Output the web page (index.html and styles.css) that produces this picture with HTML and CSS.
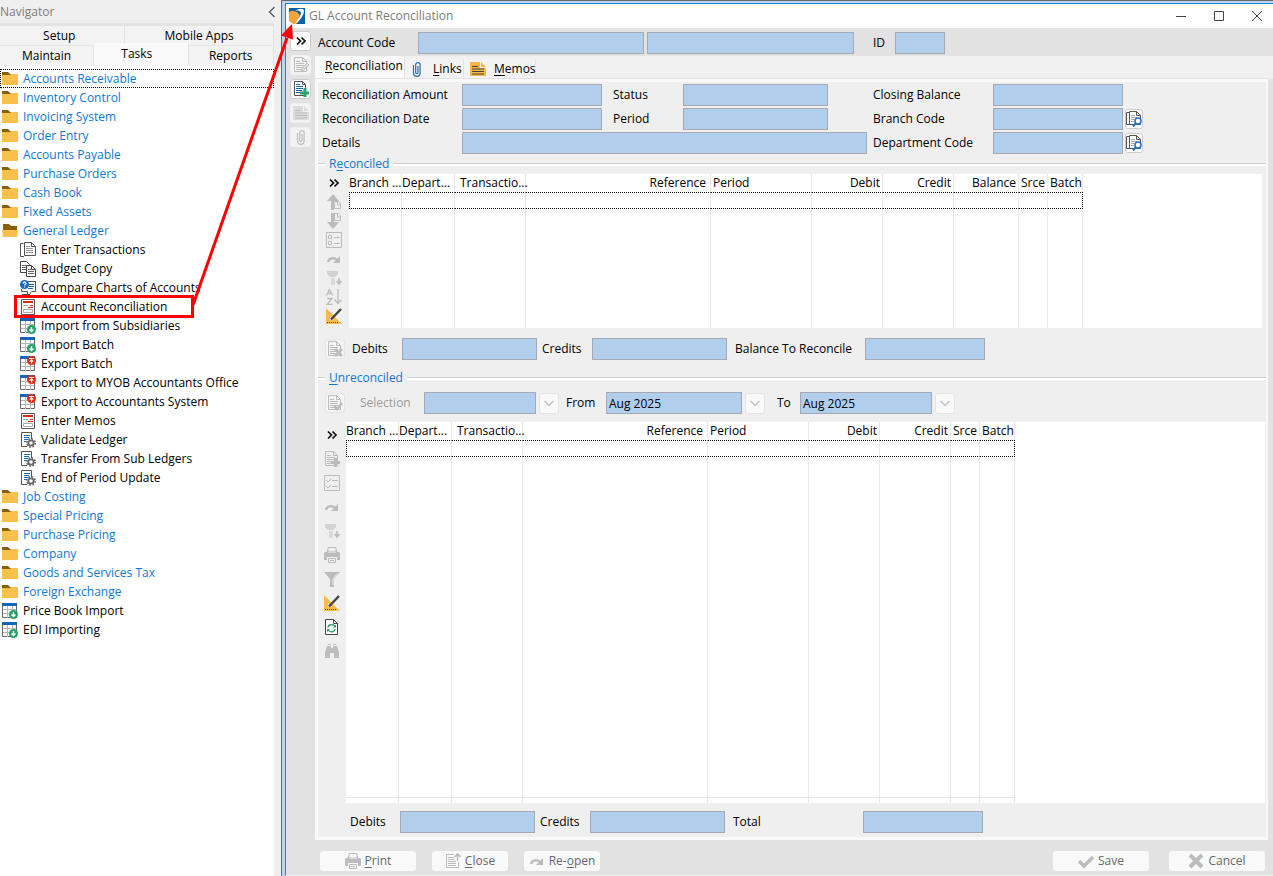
FILE: index.html
```html
<!DOCTYPE html>
<html lang="en">
<head>
<meta charset="utf-8">
<title>GL Account Reconciliation</title>
<link rel="stylesheet" href="styles.css">
</head>
<body>
<svg class="sprite" aria-hidden="true">
  <symbol id="folder" viewBox="0 0 16 16"><path d="M0 1h6l2 2h8v2H0z" fill="#8a5d0a"/><path d="M0 4h8l1-1h7v11H0z" fill="#fbc04c"/></symbol>
  <symbol id="folder-open" viewBox="0 0 16 16"><path d="M1 1h6l2 2h6v5H1z" fill="#8a5d0a"/><path d="M0 7h16l-1 7H1z" fill="#fbc04c"/></symbol>
  <symbol id="docs" viewBox="0 0 16 16"><path d="M3.500 1.500H.5v13H4M4.500.5h7l4 4v9h-11zM11.500.5v4h4" fill="#fff" stroke="#555"/><path d="M6 4.500h4M6 6.500h7M6 8.500h7M6 10.500h7" stroke="#999"/></symbol>
  <symbol id="copy" viewBox="0 0 16 16"><path d="M.5.5h6l3 3v8h-9z" fill="#fff" stroke="#444"/><path d="M2 4.500h5M2 6.500h5M2 8.500h4" stroke="#666"/><path d="M6.500 4.500h5l4 4v7h-9zM11.500 4.500v4h4" fill="#fff" stroke="#444"/><path d="M8 8.500h3M8 10.500h6M8 12.500h6" stroke="#666"/></symbol>
  <symbol id="compare" viewBox="0 0 16 16"><path d="M6 1.500h9.500v10h-4l-2 3H7.500v-3H1.500V9" fill="#fff" stroke="#555"/><path d="M9 4.500h5M9 6.500h5M8 8.500h5" stroke="#1c68b8"/><circle cx="4.500" cy="4.500" r="4.500" fill="#1564b5"/><path d="M3 3.500c0-2 3-2 3 0 0 1-1.500 1-1.500 2M4.500 6.500v1" fill="none" stroke="#fff" stroke-width="1.300"/><path d="M2 14.500h8" stroke="#555"/></symbol>
  <symbol id="form" viewBox="0 0 16 16"><path d="M1.500.5h13v15h-13z" fill="#fff" stroke="#555"/><path d="M3 3h10" stroke="#dc2a0c" stroke-width="2"/><path d="M10 6.500h3M8 8.500h5" stroke="#dc2a0c"/><path d="M3 6.500h5M3.500 10.500h9v3h-9z" fill="none" stroke="#aaa"/></symbol>
  <symbol id="grid" viewBox="0 0 16 16"><path d="M.5 1.500h14v13H.5z" fill="#fff" stroke="#666"/><path d="M5.500 3v12M10.500 3v12M1 6.500h13M1 10.500h13" stroke="#b6b6b6"/><path d="M0 0h15v3H0z" fill="#1564b5"/></symbol>
  <symbol id="import" viewBox="0 0 16 16"><use href="#grid"/><circle cx="11.500" cy="11.500" r="4.500" fill="#23a267"/><path d="M11.500 9v4M9.500 11.500l2 2 2-2" fill="none" stroke="#fff" stroke-width="1.400"/></symbol>
  <symbol id="export" viewBox="0 0 16 16"><use href="#grid"/><circle cx="11.500" cy="4.500" r="4.500" fill="#de2d10"/><path d="M9 2.500h5M11.500 7.500V4M9.700 5.600l1.800-1.700 1.800 1.700" fill="none" stroke="#fff" stroke-width="1.200"/></symbol>
  <symbol id="ledger" viewBox="0 0 16 16"><path d="M7 14.500H1.500V.5h10V7" fill="#fff" stroke="#555"/><path d="M4 3.500h6M4 5.500h5M4 7.500h4M4 9.500h3" stroke="#1c68b8"/><circle cx="11" cy="11" r="2.700" fill="#fff" stroke="#666" stroke-width="1.800"/><circle cx="11" cy="11" r="4.200" fill="none" stroke="#666" stroke-width="1.600" stroke-dasharray="1.600 1.700"/></symbol>
  <symbol id="doc" viewBox="0 0 16 16"><path d="M1.500.5h8l4 4v10h-12zM9.500.5v4h4" fill="none" stroke="currentColor"/><path d="M3 4.500h4M3 6.500h8M3 8.500h8M3 10.500h8M3 12.500h6" stroke="currentColor"/></symbol>
  <symbol id="doc-edit" viewBox="0 0 16 16"><use href="#doc"/><path d="M8 15l1-3 5-6 2 2-6 6z" fill="#ddd" stroke="currentColor"/></symbol>
  <symbol id="doc-add" viewBox="0 0 16 16"><use href="#doc"/><path d="M7 10h3V7h3v3h3v3h-3v3h-3v-3H7z" fill="currentColor"/></symbol>
  <symbol id="doc-new" viewBox="0 0 16 16"><path d="M1.500.5h8l3 3v11h-11zM9.500.5v3h3" fill="#fff" stroke="#555"/><path d="M3 3.500h4M3 5.500h7M3 7.500h7M3 9.500h6M3 11.500h5" stroke="#1c68b8"/><path d="M7 10.500h3.500V7h3v3.500H16v3h-2.500V16h-3v-2.500H7z" fill="#2aa06c"/></symbol>
  <symbol id="doc-x" viewBox="0 0 16 16"><use href="#doc"/><path d="M8 8l7 7M15 8l-7 7" stroke="currentColor" stroke-width="2.500"/></symbol>
  <symbol id="doc-ok" viewBox="0 0 16 16"><use href="#doc"/><path d="M7 11l3 3 5-6" fill="none" stroke="currentColor" stroke-width="2.500"/></symbol>
  <symbol id="doc-up" viewBox="0 0 16 16"><path d="M9 1.500H1.500v13h12V9" fill="none" stroke="currentColor"/><path d="M3 4.500h6M3 6.500h6M3 8.500h8M3 10.500h8M3 12.500h8" stroke="currentColor"/><path d="M12.500 8V1M9.500 4l3-3 3 3" fill="none" stroke="currentColor" stroke-width="1.600"/></symbol>
  <symbol id="note" viewBox="0 0 16 16"><path d="M0 1h10v6h6v8H0z" fill="currentColor"/><path d="M11 1l5 5h-5z" fill="currentColor"/><path class="note-line" d="M2 5.500h6M2 8h12M2 10.500h12M2 13h12"/></symbol>
  <symbol id="clip" viewBox="0 0 16 16"><path d="M4.500 4v8a3.300 3.300 0 0 0 6.600 0V3a2.400 2.400 0 0 0-4.400 0V11.500a1.100 1.100 0 0 0 2.300 0V5" fill="none" stroke="currentColor" stroke-width="1.200"/></symbol>
  <symbol id="chev" viewBox="0 0 16 16"><path d="M4 4.500L7.500 8 4 11.500M8.500 4.500L12 8l-3.500 3.500" fill="none" stroke="#111" stroke-width="1.700"/></symbol>
  <symbol id="up" viewBox="0 0 16 16"><path d="M5 16V7H1l6-7 6 7H8v9z" fill="currentColor"/><path d="M8.500 7.500h4l2 2v5h-6zM11.500 8v3h3" fill="#eee" stroke="currentColor"/></symbol>
  <symbol id="down" viewBox="0 0 16 16"><path d="M5 0h3v9h5l-6 7-6-7h4z" fill="currentColor"/><path d="M8.500.5h4l2 2v5h-6zM11.500 1v3h3" fill="#eee" stroke="currentColor"/></symbol>
  <symbol id="props" viewBox="0 0 16 16"><path d="M.5.500h15v15H.5zM2.500 3.500h3v3h-3zM2.500 9.500h3v3h-3zM8 5.500h6M8 11.500h6" fill="none" stroke="currentColor"/></symbol>
  <symbol id="checks" viewBox="0 0 16 16"><path d="M.5.500h15v15H.5zM2 5l2 2 3-3M2 11l2 2 3-3M8 5.500h6M8 11.500h6" fill="none" stroke="currentColor"/></symbol>
  <symbol id="redo" viewBox="0 0 16 16"><path d="M2 11c1-4 6-5 9-2" fill="none" stroke="currentColor" stroke-width="2.500"/><path d="M14 5v7H7z" fill="currentColor"/></symbol>
  <symbol id="brush" viewBox="0 0 16 16"><path d="M1 1h11v3l-3 3H4L1 4z" fill="#d2d2d2"/><path d="M5 8h4v7H5z" fill="#dadada"/><path d="M13 8v5M10.500 11l2.500 3 2.500-3" fill="none" stroke="currentColor" stroke-width="1.600"/></symbol>
  <symbol id="sort" viewBox="0 0 16 16"><path d="M.5 6.500L3.500.5l3 6M1.500 4.500h4M1 9.500h5l-5 6h5.500M12 0v14M8.500 10.500L12 14.500l3.500-4" fill="none" stroke="currentColor" stroke-width="1.300"/></symbol>
  <symbol id="design" viewBox="0 0 16 16"><path d="M0 0l16 16H0zM4 8v4h4z" fill="#fdb94d" fill-rule="evenodd"/><path d="M5 11.500L15 1" stroke="#444" stroke-width="2.400"/><path d="M1 14.500h11" stroke="#444" stroke-dasharray="1 1"/></symbol>
  <symbol id="printer" viewBox="0 0 16 16"><path d="M4 .5h8V5H4z" fill="none" stroke="currentColor"/><path d="M3 3h1v3h8V3h1v2h2l1 1v7h-3v-3H3v3H0V6l1-1h2z" fill="currentColor"/><path d="M4.500 11.500h7v4h-7zM6 13.500h4" fill="none" stroke="currentColor"/></symbol>
  <symbol id="funnel" viewBox="0 0 16 16"><path d="M0 1h16l-6 7v8H6V8z" fill="currentColor"/><path d="M13.500 2.500L9 8v6" fill="none" stroke="#efefef"/></symbol>
  <symbol id="refresh" viewBox="0 0 16 16"><path d="M1.500.5h8l4 4v11h-12zM9.500.5v4h4" fill="#fff" stroke="#444"/><path d="M4 8.500c0-3 5-4 7-1M11 10c0 3-5 4-7 1" fill="none" stroke="#23a267" stroke-width="1.300"/><path d="M12 5.500v3H9zM3 13v-3h3z" fill="#23a267"/></symbol>
  <symbol id="binoc" viewBox="0 0 16 16"><path d="M3 3h4v2h2V3h4l2 6v6h-5v-5H6v5H1V9zM4 1h3v1H4zM9 1h3v1H9z" fill="currentColor"/></symbol>
  <symbol id="lookup" viewBox="0 0 16 16"><path d="M3 1.500H.5v12H4M3.500.5h7l4 4v9h-11zM10.500.5v4h4" fill="#fff" stroke="#555"/><path d="M5 4.500h4M5 6.500h6M5 8.500h3M5 10.500h3" stroke="#aaa"/><circle cx="12" cy="10" r="3" fill="#fff" stroke="#1f71c4" stroke-width="1.500"/><path d="M10 12l-3 3.500" stroke="#1f71c4" stroke-width="2"/></symbol>
  <symbol id="drop" viewBox="0 0 16 16"><path d="M3.500 6L8 10.500 12.500 6" fill="none" stroke="#c4c4c4" stroke-width="1.500"/></symbol>
  <symbol id="tick" viewBox="0 0 16 16"><path d="M1 8l5 5 9-9" fill="none" stroke="currentColor" stroke-width="3.500"/></symbol>
  <symbol id="cross" viewBox="0 0 16 16"><path d="M2 2l12 12M14 2L2 14" stroke="currentColor" stroke-width="4"/></symbol>
  <symbol id="app" viewBox="0 0 16 16"><path d="M0 0h16v16H0z" fill="#0d62a6"/><path d="M0 4c3-2 8-1 10 2 2 4 0 8-3 10H0z" fill="#f1a43a"/><path d="M6 3c4-3 9-3 9 0 0 4-4 10-9 13 3-5 6-9 6-11s-3-3-6-2z" fill="#f5f9fc"/><path d="M0 13l4 3H0z" fill="#fff"/></symbol>
</svg>

<div class="app">
  <aside class="nav">
    <header class="nav-head"><span>Navigator</span>
      <button class="plain" type="button" aria-label="Collapse navigator"><svg width="8" height="12" viewBox="0 0 8 12"><path d="M6.500 1L1.500 6l5 5" fill="none" stroke="#555" stroke-width="1.300"/></svg></button></header>
    <div class="nav-tabs top"><button type="button">Setup</button><button type="button">Mobile Apps</button></div>
    <div class="nav-tabs low"><button type="button">Maintain</button><button type="button" class="on">Tasks</button><button type="button">Reports</button></div>
    <ul class="tree">
      <li class="focus"><a href="#"><svg><use href="#folder"/></svg>Accounts Receivable</a></li>
      <li><a href="#"><svg><use href="#folder"/></svg>Inventory Control</a></li>
      <li><a href="#"><svg><use href="#folder"/></svg>Invoicing System</a></li>
      <li><a href="#"><svg><use href="#folder"/></svg>Order Entry</a></li>
      <li><a href="#"><svg><use href="#folder"/></svg>Accounts Payable</a></li>
      <li><a href="#"><svg><use href="#folder"/></svg>Purchase Orders</a></li>
      <li><a href="#"><svg><use href="#folder"/></svg>Cash Book</a></li>
      <li><a href="#"><svg><use href="#folder"/></svg>Fixed Assets</a></li>
      <li><a href="#"><svg><use href="#folder-open"/></svg>General Ledger</a>
        <ul>
          <li><a href="#"><svg><use href="#docs"/></svg>Enter Transactions</a></li>
          <li><a href="#"><svg><use href="#copy"/></svg>Budget Copy</a></li>
          <li><a href="#"><svg><use href="#compare"/></svg>Compare Charts of Accounts</a></li>
          <li><a href="#"><svg><use href="#form"/></svg>Account Reconciliation</a></li>
          <li><a href="#"><svg><use href="#import"/></svg>Import from Subsidiaries</a></li>
          <li><a href="#"><svg><use href="#import"/></svg>Import Batch</a></li>
          <li><a href="#"><svg><use href="#export"/></svg>Export Batch</a></li>
          <li><a href="#"><svg><use href="#export"/></svg>Export to MYOB Accountants Office</a></li>
          <li><a href="#"><svg><use href="#export"/></svg>Export to Accountants System</a></li>
          <li><a href="#"><svg><use href="#form"/></svg>Enter Memos</a></li>
          <li><a href="#"><svg><use href="#ledger"/></svg>Validate Ledger</a></li>
          <li><a href="#"><svg><use href="#ledger"/></svg>Transfer From Sub Ledgers</a></li>
          <li><a href="#"><svg><use href="#ledger"/></svg>End of Period Update</a></li>
        </ul>
      </li>
      <li><a href="#"><svg><use href="#folder"/></svg>Job Costing</a></li>
      <li><a href="#"><svg><use href="#folder"/></svg>Special Pricing</a></li>
      <li><a href="#"><svg><use href="#folder"/></svg>Purchase Pricing</a></li>
      <li><a href="#"><svg><use href="#folder"/></svg>Company</a></li>
      <li><a href="#"><svg><use href="#folder"/></svg>Goods and Services Tax</a></li>
      <li><a href="#"><svg><use href="#folder"/></svg>Foreign Exchange</a></li>
      <li class="leaf"><a href="#"><svg><use href="#import"/></svg>Price Book Import</a></li>
      <li class="leaf"><a href="#"><svg><use href="#import"/></svg>EDI Importing</a></li>
    </ul>
  </aside>

  <main class="window">
    <header class="title"><svg><use href="#app"/></svg><h1>GL Account Reconciliation</h1>
      <button class="plain" type="button" aria-label="Minimize"><svg width="12" height="12"><path d="M1 6.500h10" stroke="#444"/></svg></button>
      <button class="plain" type="button" aria-label="Maximize"><svg width="12" height="12"><path d="M1.500 1.500h9v9h-9z" fill="none" stroke="#444"/></svg></button>
      <button class="plain" type="button" aria-label="Close window"><svg width="12" height="12"><path d="M1 1l10 10M11 1L1 11" stroke="#444"/></svg></button>
    </header>
    <div class="work">
      <div class="side">
        <button class="tool" type="button" aria-label="Expand"><svg><use href="#chev"/></svg></button>
        <button class="tool" type="button" aria-label="Edit" disabled><svg><use href="#doc-edit"/></svg></button>
        <button class="tool" type="button" aria-label="New"><svg><use href="#doc-new"/></svg></button>
        <button class="tool memo" type="button" aria-label="Memo" disabled><svg><use href="#note"/></svg></button>
        <button class="tool" type="button" aria-label="Attachment" disabled><svg><use href="#clip"/></svg></button>
      </div>
      <div class="content">
        <div class="account">
          <label for="code">Account Code</label><input id="code"><input id="name" aria-label="Account name"><label for="id">ID</label><input id="id">
        </div>
        <div class="tabs">
          <button class="on" type="button"><span><u>R</u>econciliation</span></button>
          <button class="links" type="button"><svg><use href="#clip"/></svg><span><u>L</u>inks</span></button>
          <button class="memos" type="button"><svg><use href="#note"/></svg><span><u>M</u>emos</span></button>
        </div>
        <div class="panel">
          <div class="details">
            <label for="amount">Reconciliation Amount</label><input id="amount">
            <label class="c4" for="status">Status</label><input id="status">
            <label class="c8" for="closing">Closing Balance</label><input id="closing">
            <label class="c1" for="date">Reconciliation Date</label><input id="date">
            <label class="c4" for="period">Period</label><input id="period">
            <label class="c8" for="branch">Branch Code</label><input id="branch">
            <button class="look" type="button" aria-label="Find branch"><svg><use href="#lookup"/></svg></button>
            <label class="c1" for="details">Details</label><input class="wide" id="details">
            <label class="c8" for="dept">Department Code</label><input id="dept">
            <button class="look" type="button" aria-label="Find department"><svg><use href="#lookup"/></svg></button>
          </div>
          <h2><span>R<u>e</u>conciled</span></h2>
          <div class="listing first">
            <div class="rail">
              <button type="button" aria-label="Expand"><svg><use href="#chev"/></svg></button>
              <button type="button" aria-label="Move up" disabled><svg><use href="#up"/></svg></button>
              <button type="button" aria-label="Move down" disabled><svg><use href="#down"/></svg></button>
              <button type="button" aria-label="Properties" disabled><svg><use href="#props"/></svg></button>
              <button type="button" aria-label="Redo" disabled><svg><use href="#redo"/></svg></button>
              <button type="button" aria-label="Format" disabled><svg><use href="#brush"/></svg></button>
              <button type="button" aria-label="Sort" disabled><svg><use href="#sort"/></svg></button>
              <button type="button" aria-label="Design"><svg><use href="#design"/></svg></button>
            </div>
            <div class="sheet">
              <table>
                <colgroup><col class="w53"><col class="w53"><col class="w71"><col class="w185"><col class="w101"><col class="w71"><col class="w71"><col class="w65"><col class="w29"><col class="w35"></colgroup>
                <thead><tr><th>Branch ...</th><th class="tight">Depart...</th><th class="in">Transactio...</th><th class="r ref">Reference</th><th>Period</th><th class="r">Debit</th><th class="r">Credit</th><th class="r">Balance</th><th>Srce</th><th>Batch</th></tr></thead>
                <tbody><tr class="row"><td></td><td></td><td></td><td></td><td></td><td></td><td></td><td></td><td></td><td></td></tr>
                <tr class="rest"><td></td><td></td><td></td><td></td><td></td><td></td><td></td><td></td><td></td><td></td></tr></tbody>
              </table>
            </div>
          </div>
          <div class="sums">
            <button class="mini" type="button" aria-label="Clear" disabled><svg><use href="#doc-x"/></svg></button>
            <label for="d1">Debits</label><input id="d1">
            <label for="c1">Credits</label><input id="c1">
            <label for="b1">Balance To Reconcile</label><input id="b1">
          </div>
          <h2><span><u>U</u>nreconciled</span></h2>
          <div class="select">
            <button class="mini" type="button" aria-label="Select" disabled><svg><use href="#doc-ok"/></svg></button>
            <label class="dim" for="sel">Selection</label><input id="sel">
            <button class="drop" type="button" aria-label="Open selection" disabled><svg><use href="#drop"/></svg></button>
            <label for="from">From</label><input id="from" value="Aug 2025">
            <button class="drop" type="button" aria-label="Open from period" disabled><svg><use href="#drop"/></svg></button>
            <label for="to">To</label><input id="to" value="Aug 2025">
            <button class="drop" type="button" aria-label="Open to period" disabled><svg><use href="#drop"/></svg></button>
          </div>
          <div class="listing second">
            <div class="rail">
              <button type="button" aria-label="Expand"><svg><use href="#chev"/></svg></button>
              <button type="button" aria-label="Add" disabled><svg><use href="#doc-add"/></svg></button>
              <button type="button" aria-label="Check all" disabled><svg><use href="#checks"/></svg></button>
              <button type="button" aria-label="Redo" disabled><svg><use href="#redo"/></svg></button>
              <button type="button" aria-label="Format" disabled><svg><use href="#brush"/></svg></button>
              <button type="button" aria-label="Print list" disabled><svg><use href="#printer"/></svg></button>
              <button type="button" aria-label="Filter" disabled><svg><use href="#funnel"/></svg></button>
              <button type="button" aria-label="Design"><svg><use href="#design"/></svg></button>
              <button type="button" aria-label="Refresh"><svg><use href="#refresh"/></svg></button>
              <button type="button" aria-label="Find" disabled><svg><use href="#binoc"/></svg></button>
            </div>
            <div class="sheet">
              <table>
                <colgroup><col class="w53"><col class="w53"><col class="w71"><col class="w185"><col class="w101"><col class="w71"><col class="w71"><col class="w29"><col class="w35"></colgroup>
                <thead><tr><th>Branch ...</th><th class="tight">Depart...</th><th class="in">Transactio...</th><th class="r ref">Reference</th><th>Period</th><th class="r">Debit</th><th class="r">Credit</th><th>Srce</th><th>Batch</th></tr></thead>
                <tbody><tr class="row"><td></td><td></td><td></td><td></td><td></td><td></td><td></td><td></td><td></td></tr>
                <tr class="rest"><td></td><td></td><td></td><td></td><td></td><td></td><td></td><td></td><td></td></tr></tbody>
                <tfoot><tr><td></td><td></td><td></td><td></td><td></td><td></td><td></td><td></td><td></td></tr></tfoot>
              </table>
            </div>
          </div>
          <div class="sums last">
            <label for="d2">Debits</label><input id="d2">
            <label for="c2">Credits</label><input id="c2">
            <label for="t2">Total</label><input id="t2">
          </div>
        </div>
      </div>
    </div>
    <footer class="actions">
      <div class="group">
        <button class="big" type="button" disabled><svg><use href="#printer"/></svg><span><u>P</u>rint</span></button>
        <button type="button" disabled><svg><use href="#doc-up"/></svg><span><u>C</u>lose</span></button>
        <button type="button" disabled><svg><use href="#redo"/></svg><span>Re-<u>o</u>pen</span></button>
      </div>
      <div class="group end">
        <button class="big" type="button" disabled><svg><use href="#tick"/></svg><span>Save</span></button>
        <button class="big" type="button" disabled><svg><use href="#cross"/></svg><span>Cancel</span></button>
      </div>
    </footer>
  </main>
</div>
<svg class="callout" width="320" height="330" aria-hidden="true"><path d="M15.500 296.500h177v20h-177z" fill="none" stroke="#f00" stroke-width="3"/><path d="M193 305L287 38" stroke="#f00" stroke-width="3"/><path d="M292 24L281 35.500l12 4z" fill="#f00"/></svg>
</body>
</html>
```
FILE: styles.css
```css
* { box-sizing: border-box; }
body { margin: 0; background: #efefef; color: #000; font: 12px/18px "Open Sans", "Noto Sans", sans-serif; }
button, input { font: inherit; color: inherit; margin: 0; }
button { padding: 0; border: 0; background: none; display: flex; align-items: center; justify-content: center; }
svg { width: 16px; height: 16px; flex: none; display: block; }
.sprite { position: absolute; width: 0; height: 0; }
.plain svg { width: 12px; height: 12px; }
label { white-space: nowrap; }
u { text-underline-offset: 2px; }
input { height: 22px; width: 100%; min-width: 0; padding: 0 2px; border: 1px solid #a6a9b1; border-radius: 0; background: #b1ceec; }

.app { display: grid; grid-template-columns: 281px minmax(0, 1fr); height: 100vh; overflow: hidden; }

.nav { display: flex; flex-direction: column; background: #efefef; }
.nav-head { display: flex; justify-content: space-between; align-items: center; height: 23px; padding-right: 3px; color: #7c7c7c; }
.nav-tabs { display: flex; height: 20px; margin-right: 7px; background: #e3e3e3; }
.nav-tabs.top { height: 23px; padding-top: 3px; border-bottom: 1px solid #e6e6e6; }
.nav-tabs button { flex: 97; background: #f3f3f3; border-right: 1px solid #e3e3e3; }
.nav-tabs.top button:first-child { flex: 122; padding-right: 6px; }
.nav-tabs.top button:last-child { flex: 152; }
.nav-tabs button.on { flex: 89; margin-top: -3px; padding: 0 8px 2px 0; background: #f9f9f9; }
.nav-tabs.low button:last-child { flex: 88; }
.tree { flex: 1; margin: 0 7px 0 0; padding: 3px 0 0; list-style: none; background: #fff; }
.tree ul { margin: 0; padding: 0 0 0 18px; list-style: none; }
.tree a { display: flex; align-items: center; gap: 5px; height: 19px; padding-left: 2px; color: #0f78d4; text-decoration: none; white-space: nowrap; }
.tree ul a, .tree .leaf a { color: #000; }
.focus { outline: 1px dotted #000; outline-offset: -1px; }

.window { display: flex; flex-direction: column; min-width: 0; border-top: 1px solid #6b6b6b; border-left: 1px solid #6b6b6b; background: #b8d6ef; padding: 2px 0 0 3px; }
.title { display: flex; align-items: center; height: 25px; padding: 0 10px 0 3px; background: #fff; border-top: 1px solid #1c88cf; border-left: 1px solid #1c88cf; color: #7c7c7c; }
.title h1 { flex: 1; margin: 0 0 0 4px; font-size: 12px; font-weight: 400; }
.title button { width: 12px; margin-left: 26px; }
.work { flex: 1; display: flex; min-height: 0; border-left: 1px solid #1c88cf; background: #e2e2e2; }
.side { width: 29px; padding: 3px 4px; display: flex; flex-direction: column; gap: 4px; }
.tool { width: 21px; height: 20px; border: 1px solid #ccc; border-radius: 3px; background: #fcfcfc; }
.tool:disabled { border-color: #eee; background: #f3f3f3; }
button:disabled { color: #bcbcbc; }
.note-line { stroke: var(--line, #fff); }
.tool.memo { --line: #bcbcbc; color: #dcdcdc; }
.content { flex: 1; display: flex; flex-direction: column; min-width: 0; }
.account { display: grid; grid-template-columns: 97px 226px 207px 35px 50px; column-gap: 3px; align-items: center; height: 28px; padding: 3px 2px 1px 3px; }
.account label:nth-of-type(2) { padding-left: 16px; }
.tabs { display: flex; align-items: flex-end; height: 23px; background: #f0f0f0; }
.tabs button { justify-content: flex-start; height: 20px; background: #f3f3f3; border-right: 1px solid #e2e2e2; gap: 8px; }
.tabs .on { height: 23px; width: 90px; padding: 0 0 3px 10px; background: #fafafa; }
.tabs .links { width: 59px; padding-left: 4px; }
.tabs .memos { width: 72px; padding-left: 6px; }
.links svg { color: #2b6cb0; }
.memos svg { --line: #444; color: #fbb545; }
.panel { flex: 1; display: flex; flex-direction: column; min-height: 0; margin-right: 5px; padding: 2px 0 0; background: #efefef; border: 3px solid #f9f9f9; outline: 1px solid #e2e2e2; border-right-width: 2px; }
.details { display: grid; grid-template-columns: 140px 140px 11px 70px 145px 39px 6px 120px 130px 2px 18px; grid-auto-rows: 22px; row-gap: 2px; align-items: center; padding-left: 4px; }
.c1 { grid-column: 1; }
.c4 { grid-column: 4; }
.c8 { grid-column: 8; }
.wide { grid-column: 2 / 7; }
.look { grid-column: 11; width: 18px; height: 20px; border: 1px solid #ccc; border-radius: 3px; background: #fff; }
h2 { display: flex; align-items: center; gap: 4px; height: 18px; margin: 1px 0 0; font-size: 12px; font-weight: 400; color: #0f78d4; }
h2::before, h2::after { content: ""; height: 2px; border-top: 1px solid #cfcfcf; background: #fff; }
h2::before { width: 7px; }
h2::after { flex: 1; }
.listing { display: flex; }
.first { height: 154px; margin-top: 1px; padding-right: 4px; }
.second { flex: 1; min-height: 0; padding-right: 1px; }
.rail { width: 31px; padding-top: 1px; display: flex; flex-direction: column; gap: 3px; }
.second .rail { width: 28px; padding-top: 5px; gap: 8px; }
.sheet { flex: 1; min-width: 0; background: #fff; }
table { table-layout: fixed; width: 0; height: 100%; border-collapse: separate; border-spacing: 0; }
th, td { padding: 0; border-right: 1px solid #e8e8e8; }
th { height: 18px; font-weight: 400; text-align: left; white-space: nowrap; line-height: 18px; }
th + th { padding-left: 2px; }
th.tight { padding-left: 0; }
th.in { padding-left: 5px; }
.r { text-align: right; padding-right: 2px; }
.ref { padding-right: 4px; }
.row td { height: 17px; border-top: 1px dotted #000; border-bottom: 1px dotted #000; }
.row td:first-child { border-left: 1px dotted #000; }
.row td:last-child { border-right: 1px dotted #000; }
tfoot td { height: 6px; border-top: 1px solid #e8e8e8; }
.w29 { width: 29px; }
.w35 { width: 35px; }
.w53 { width: 53px; }
.w65 { width: 65px; }
.w71 { width: 71px; }
.w101 { width: 101px; }
.w185 { width: 185px; }
.sums { display: grid; grid-template-columns: 27px 50px 135px 5px 50px 135px 8px 130px 120px; align-items: center; height: 40px; padding: 2px 0 0 7px; }
.sums label:nth-of-type(1) { grid-column: 2; }
.sums label:nth-of-type(2) { grid-column: 5; }
.sums label:nth-of-type(3) { grid-column: 8; }
.last { height: 34px; padding: 4px 0 0 5px; }
.mini { width: 20px; height: 20px; border: 1px solid #e6e6e6; border-radius: 3px; background: #f5f5f5; }
.select { display: grid; grid-template-columns: 35px 64px 112px 3px 20px 7px 40px 136px 3px 20px 12px 23px 132px 3px 20px; align-items: center; height: 35px; padding: 0 0 3px 7px; }
.select .drop:nth-of-type(2) { grid-column: 5; }
.select label[for="from"] { grid-column: 7; }
.select .drop:nth-of-type(3) { grid-column: 10; }
.select label[for="to"] { grid-column: 12; }
.select .drop:nth-of-type(4) { grid-column: 15; }
.dim { color: #9b9b9b; }
.drop { width: 20px; height: 21px; border: 1px solid #e4e4e4; border-radius: 3px; background: #f9f9f9; }
.actions { display: flex; align-items: center; justify-content: space-between; height: 36px; padding: 6px 8px 0 34px; border-left: 1px solid #1c88cf; border-bottom: 1px solid #f0f0f0; background: #e2e2e2; }
.group { display: flex; gap: 16px; }
.group.end { gap: 20px; }
.actions button { width: 76px; height: 20px; gap: 4px; border-radius: 3px; background: #f9f9f9; }
.actions .big { width: 96px; }
.actions span { color: #686868; }
.callout { position: absolute; left: 0; top: 0; width: 320px; height: 330px; pointer-events: none; }
```
